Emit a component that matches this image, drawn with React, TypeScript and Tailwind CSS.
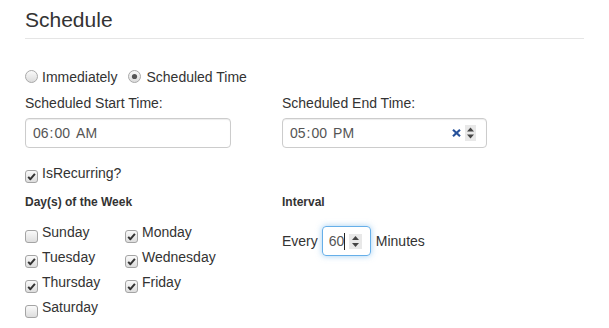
import React from "react";

const Box = ({ checked }: { checked?: boolean }) => (
  <svg width="13" height="13" viewBox="0 0 13 13" className="shrink-0">
    <defs>
      <linearGradient id="boxbg" x1="0" y1="0" x2="0" y2="1">
        <stop offset="0" stopColor="#fbfbfb" />
        <stop offset="1" stopColor="#dcdcdc" />
      </linearGradient>
    </defs>
    <rect x="0.5" y="0.5" width="12" height="12" rx="2.5" fill="url(#boxbg)" stroke="#a4a4a4" />
    {checked && (
      <path d="M3.2 6.9 L5.4 9.2 L9.9 3.9" fill="none" stroke="#333" strokeWidth="2" strokeLinejoin="round" />
    )}
  </svg>
);

const Radio = ({ checked }: { checked?: boolean }) => (
  <svg width="13" height="13" viewBox="0 0 13 13" className="shrink-0">
    <defs>
      <linearGradient id="radbg" x1="0" y1="0" x2="0" y2="1">
        <stop offset="0" stopColor="#fbfbfb" />
        <stop offset="1" stopColor="#dadada" />
      </linearGradient>
    </defs>
    <circle cx="6.5" cy="6.5" r="6" fill="url(#radbg)" stroke="#a9a9a9" />
    {checked && <circle cx="6.5" cy="6.5" r="2.6" fill="#555" />}
  </svg>
);

const Spinner = ({ w, h }: { w: number; h: number }) => (
  <svg width={w} height={h} viewBox={`0 0 ${w} ${h}`} className="shrink-0">
    <rect width={w} height={h} fill="#e8e8e8" />
    <path d={`M${w / 2 - 3.5} ${h / 2 - 1.5} L${w / 2} ${h / 2 - 5.5} L${w / 2 + 3.5} ${h / 2 - 1.5} Z`} fill="#444" />
    <path d={`M${w / 2 - 3.5} ${h / 2 + 1.5} L${w / 2} ${h / 2 + 5.5} L${w / 2 + 3.5} ${h / 2 + 1.5} Z`} fill="#444" />
  </svg>
);

const TimeText = ({ hh, mm, ap }: { hh: string; mm: string; ap: string }) => (
  <span className="text-[#555]">
    {hh}
    <span className="mx-[1px]">:</span>
    {mm}
    <span className="ml-[6px]">{ap}</span>
  </span>
);

const Day = ({ label, checked }: { label: string; checked?: boolean }) => (
  <div className="flex items-start h-[25px]">
    <div className="mt-[8px]">
      <Box checked={checked} />
    </div>
    <span className="ml-[4px] leading-[20px]">{label}</span>
  </div>
);

export default function App() {
  return (
    <div className="w-[609px] h-[328px] overflow-hidden bg-white px-[25px] font-['Liberation_Sans',Arial,sans-serif] text-[14px] text-[#333]">
      <div className="pt-[5px] pb-[3px] leading-[30px] text-[21px] border-b border-[#e5e5e5]">Schedule</div>

      <div className="mt-[28px] flex items-start h-[20px] leading-[20px]">
        <div className="mt-[3px]">
          <Radio />
        </div>
        <span className="ml-[4px]">Immediately</span>
        <div className="mt-[3px] ml-[11px]">
          <Radio checked />
        </div>
        <span className="ml-[5px]">Scheduled Time</span>
      </div>

      <div className="mt-[6px] grid grid-cols-[257px_1fr]">
        <div>
          <div className="leading-[20px]">Scheduled Start Time:</div>
          <div className="mt-[5px] w-[206px] h-[30px] flex items-center pl-[7px] border border-[#ccc] rounded-[4px] shadow-[inset_0_1px_1px_rgba(0,0,0,0.075)]">
            <TimeText hh="06" mm="00" ap="AM" />
          </div>
        </div>
        <div>
          <div className="leading-[20px]">Scheduled End Time:</div>
          <div className="mt-[5px] w-[205px] h-[30px] flex items-center pl-[7px] pr-[10px] border border-[#ccc] rounded-[4px] shadow-[inset_0_1px_1px_rgba(0,0,0,0.075)]">
            <TimeText hh="05" mm="00" ap="PM" />
            <svg width="9" height="8" viewBox="0 0 9 8" className="ml-auto mr-[4px]">
              <path d="M1 0.8 L8 7.2 M8 0.8 L1 7.2" stroke="#27529b" strokeWidth="2.2" />
            </svg>
            <Spinner w={11} h={16} />
          </div>
        </div>
      </div>

      <div className="mt-[15px] flex items-start h-[20px]">
        <div className="mt-[7px]">
          <Box checked />
        </div>
        <span className="ml-[4px] leading-[20px]">IsRecurring?</span>
      </div>

      <div className="mt-[11px] grid grid-cols-[257px_1fr]">
        <div>
          <div className="text-[12px] font-bold leading-[17px]">Day(s) of the Week</div>
          <div className="mt-[11px] grid grid-cols-[100px_1fr]">
            <div>
              <Day label="Sunday" />
              <Day label="Tuesday" checked />
              <Day label="Thursday" checked />
              <Day label="Saturday" />
            </div>
            <div>
              <Day label="Monday" checked />
              <Day label="Wednesday" checked />
              <Day label="Friday" checked />
            </div>
          </div>
        </div>
        <div>
          <div className="text-[12px] font-bold leading-[17px]">Interval</div>
          <div className="mt-[15px] flex items-center">
            <span>Every</span>
            <div className="ml-[4px] w-[49px] h-[30px] flex items-center pl-[6px] pr-[8px] border border-[#66afe9] rounded-[4px] shadow-[0_0_6px_rgba(102,175,233,0.6)]">
              <span className="text-[#555]">60</span>
              <span className="w-[1px] h-[17px] bg-[#222]" />
              <div className="ml-auto">
                <Spinner w={13} h={15} />
              </div>
            </div>
            <span className="ml-[5px]">Minutes</span>
          </div>
        </div>
      </div>
    </div>
  );
}
